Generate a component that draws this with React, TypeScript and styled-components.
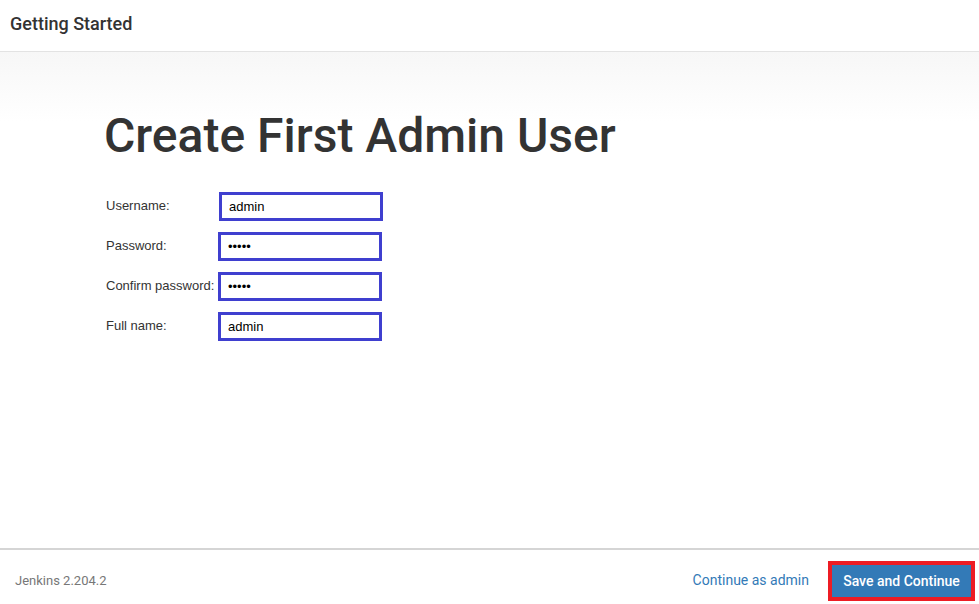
import React from "react";
import styled, { createGlobalStyle } from "styled-components";

const GlobalStyle = createGlobalStyle`
  html, body {
    margin: 0;
    padding: 0;
    background: #fff;
  }
  #root {
    height: 604px;
  }
`;

const Page = styled.div`
  display: flex;
  flex-direction: column;
  height: 604px;
  font-family: Roboto, "Liberation Sans", sans-serif;
  color: #333;
`;

const Header = styled.header`
  height: 52px;
  border-bottom: 1px solid #e3e3e3;
  display: flex;
  align-items: center;
  padding: 0 0 5px 10px;
  box-sizing: border-box;
  font-size: 18px;
  font-weight: 500;
  color: #333;
`;

const Body = styled.main`
  flex: 1;
  background: linear-gradient(to bottom, #f7f7f7 0px, #ffffff 70px);
  padding: 56px 0 0 104px;
`;

const Title = styled.h1`
  margin: 0 0 28px;
  font-size: 48px;
  font-weight: 500;
  line-height: 56px;
  color: #333;
`;

const Form = styled.div`
  display: grid;
  grid-template-columns: 112px 164px;
  row-gap: 11px;
  padding-left: 2px;
  font-family: "Liberation Sans", Arial, sans-serif;
`;

const Label = styled.label`
  font-size: 13px;
  color: #333;
  padding-top: 6px;
  height: 29px;
  box-sizing: border-box;
`;

const Input = styled.input<{ $shift?: number }>`
  box-sizing: border-box;
  width: 164px;
  height: 29px;
  border: 3px solid #3f3fcf;
  padding: 0 7px;
  font-family: "Liberation Sans", Arial, sans-serif;
  font-size: 13px;
  color: #000;
  outline: none;
  background: #fff;
  margin-left: ${(p) => p.$shift ?? 0}px;
`;

const Footer = styled.footer`
  height: 54px;
  border-top: 2px solid #d5d5d5;
  display: flex;
  align-items: center;
  padding: 0 4px 0 15px;
`;

const Version = styled.span`
  font-size: 13px;
  color: #777;
  flex: 1;
  padding-top: 7px;
`;

const Link = styled.a`
  font-size: 14px;
  color: #337ab7;
  text-decoration: none;
  margin-right: 19px;
  padding-top: 6px;
`;

const Highlight = styled.div`
  border: 4px solid #ed1c24;
  margin-top: 8px;
`;

const PrimaryButton = styled.button`
  display: block;
  width: 139px;
  height: 32px;
  background: #337ab7;
  color: #fff;
  border: none;
  font-family: Roboto, "Liberation Sans", sans-serif;
  font-size: 14px;
  font-weight: 500;
  padding: 0;
`;

const fields = [
  { label: "Username:", value: "admin", type: "text", shift: 1 },
  { label: "Password:", value: "admin", type: "password" },
  { label: "Confirm password:", value: "admin", type: "password" },
  { label: "Full name:", value: "admin", type: "text" },
];

export default function App() {
  return (
    <>
      <GlobalStyle />
      <Page>
        <Header>Getting Started</Header>
        <Body>
          <Title>Create First Admin User</Title>
          <Form>
            {fields.map((f) => (
              <React.Fragment key={f.label}>
                <Label>{f.label}</Label>
                <Input type={f.type} defaultValue={f.value} $shift={f.shift} />
              </React.Fragment>
            ))}
          </Form>
        </Body>
        <Footer>
          <Version>Jenkins 2.204.2</Version>
          <Link href="#">Continue as admin</Link>
          <Highlight>
            <PrimaryButton>Save and Continue</PrimaryButton>
          </Highlight>
        </Footer>
      </Page>
    </>
  );
}
